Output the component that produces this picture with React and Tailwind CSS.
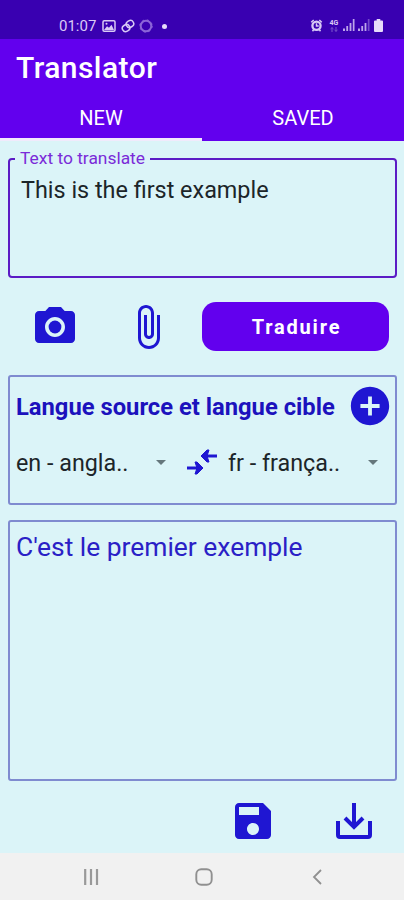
const blue = "#1f16d2";

const StatusBar = () => {
  return (
    <div className="h-[39px] shrink-0 bg-[#3900b1] flex justify-between pt-[16px] pl-[59px] pr-[21px] text-[#d9caf5]">
      <div className="flex items-center h-[20px]">
        <span className="w-[43px] text-[15px] leading-[20px] whitespace-nowrap">01:07</span>
        <svg width="14" height="12" viewBox="0 0 14 12" fill="none" stroke="currentColor">
          <rect x="1" y="0.8" width="12" height="10.4" rx="1.2" strokeWidth="1.5" />
          <path d="M2 10 5 6.2 7 7.8l2.5-3 2.5 5.2z" fill="currentColor" stroke="none" />
          <circle cx="4.5" cy="3.7" r="1" fill="currentColor" stroke="none" />
        </svg>
        <svg className="ml-[5px]" width="14" height="14" viewBox="0 0 14 14" fill="none" stroke="currentColor" strokeWidth="1.5">
          <rect x="5.2" y="1.6" width="7.6" height="6.6" rx="3.3" transform="rotate(-30 9 5)" />
          <rect x="1.2" y="5.8" width="7.6" height="6.6" rx="3.3" transform="rotate(-30 5 9)" />
        </svg>
        <svg className="ml-[4px]" width="14" height="14" viewBox="0 0 14 14" fill="none" stroke="#8c64d8">
          <circle cx="7" cy="7" r="5.3" strokeWidth="2" />
          <circle cx="7" cy="7" r="6.2" strokeWidth="1" strokeDasharray="2 2.9" />
        </svg>
        <span className="ml-[9px] size-[5px] rounded-full bg-[#e6dbfa]" />
      </div>
      <div className="flex items-center h-[18px]">
        <svg width="13" height="13" viewBox="0 0 12 13" fill="none" stroke="currentColor">
          <circle cx="6" cy="6.8" r="4.1" strokeWidth="2.3" />
          <path d="M6 4.2V7h2.2M.7 3.2 3.2 1M11.3 3.2 8.8 1M2 12.2l1.4-2M10 12.2l-1.4-2" strokeWidth="1.5" />
        </svg>
        <div className="ml-[6px] w-[10px] flex flex-col items-center">
          <span className="text-[7px] leading-[8px] font-bold">4G</span>
          <svg width="8" height="5" viewBox="0 0 8 5" fill="none" stroke="#7d56cc">
            <path d="M2 5V.8M.5 2 2 .6 3.5 2M6 0v4.2M4.5 3 6 4.4 7.5 3" />
          </svg>
        </div>
        <svg className="ml-[4px]" width="12" height="12" viewBox="0 0 12 12" fill="#bda5ea">
          <path d="M0 9.5h2V12H0zM3.3 7h1.8v5H3.3zM6.6 4h1.8v8H6.6zM9.8 0h1.7v12H9.8z" />
        </svg>
        <svg className="ml-[3px]" width="12" height="12" viewBox="0 0 12 12" fill="#bda5ea">
          <path d="M0 9.5h2V12H0zM3.3 7h1.8v5H3.3zM6.6 4h1.8v8H6.6z" />
          <path d="M9.8 0h1.7v12H9.8z" opacity=".45" />
        </svg>
        <svg className="ml-[4px]" width="9" height="13" viewBox="0 0 9 13" fill="#e6dcfa">
          <path d="M2.7 0h3.6v1.5H8q1 0 1 1V12q0 1-1 1H1q-1 0-1-1V2.5q0-1 1-1h1.7z" />
        </svg>
      </div>
    </div>
  );
};

const Header = () => {
  return (
    <header className="h-[102px] shrink-0 bg-[#6200ee] text-white flex flex-col">
      <h1 className="h-[57px] pl-[16px] text-[30px] leading-[57px] font-medium tracking-[0.45px]">Translator</h1>
      <nav className="flex">
        <button className="flex-1 h-[45px] border-b-[3px] border-[#f1eafc] pt-[1px] text-[20px]">NEW</button>
        <button className="flex-1 h-[45px] border-b-[3px] border-transparent pt-[1px] text-[20px]">SAVED</button>
      </nav>
    </header>
  );
};

const LanguageSelect = ({ label, className }) => {
  return (
    <button className={`flex items-center justify-between text-[23.3px] leading-[30px] text-[#1c2529] ${className}`}>
      <span className="pt-[2px] whitespace-nowrap">{label}</span>
      <svg width="10" height="5" viewBox="0 0 10 5" fill="#65777c">
        <path d="M0 0h10L5 5z" />
      </svg>
    </button>
  );
};

const NavigationBar = () => {
  return (
    <div className="h-[47px] shrink-0 bg-[#f1f1f1] flex items-center pl-[83px]">
      <svg width="16" height="16" viewBox="0 0 16 16" fill="none" stroke="#999" strokeWidth="2.2">
        <path d="M2.2 0v16M8 0v16M14 0v16" />
      </svg>
      <svg className="ml-[96px]" width="18" height="18" viewBox="0 0 18 18" fill="none" stroke="#909090" strokeWidth="1.9">
        <rect x="1.3" y="1.3" width="15.4" height="15.4" rx="5" />
      </svg>
      <svg className="ml-[99px]" width="10" height="16" viewBox="0 0 10 16" fill="none" stroke="#909090" strokeWidth="1.8">
        <path d="M9 1 2 8l7 7" />
      </svg>
    </div>
  );
};

const App = () => {
  return (
    <div className="w-[404px] h-[900px] overflow-hidden flex flex-col bg-[#dbf4f8] font-['Roboto',sans-serif]">
      <StatusBar />
      <Header />

      <main className="flex-1 flex flex-col pl-[8px] pr-[7px] pt-[9px]">
        <fieldset className="h-[128px] shrink-0 border-2 border-[#5b1bc5] rounded-[4px] px-[5px] min-w-0">
          <legend className="px-[5px] text-[17.4px] leading-[17px] text-[#7a2bd8] whitespace-nowrap">Text to translate</legend>
          <p className="pt-[9px] pl-[6px] text-[23.4px] leading-[28px] text-[#1c2529] whitespace-nowrap">This is the first example</p>
        </fieldset>

        <div className="mt-[24px] h-[49px] flex items-center">
          <button className="ml-[23px]">
            <svg width="48" height="48" viewBox="0 0 24 24" fill={blue}>
              <circle cx="12" cy="12" r="3.2" />
              <path d="M9 2 7.17 4H4c-1.1 0-2 .9-2 2v12c0 1.1.9 2 2 2h16c1.1 0 2-.9 2-2V6c0-1.1-.9-2-2-2h-3.17L15 2H9zm3 15c-2.76 0-5-2.24-5-5s2.24-5 5-5 5 2.24 5 5-2.24 5-5 5z" />
            </svg>
          </button>
          <button className="ml-[45px]">
            <svg width="48" height="48" viewBox="0 0 24 24" fill={blue}>
              <path d="M16.5 6v11.5c0 2.21-1.79 4-4 4s-4-1.79-4-4V5c0-1.38 1.12-2.5 2.5-2.5s2.5 1.12 2.5 2.5v10.5c0 .55-.45 1-1 1s-1-.45-1-1V6H10v9.5c0 1.38 1.12 2.5 2.5 2.5s2.5-1.12 2.5-2.5V5c0-2.21-1.79-4-4-4S7 2.79 7 5v12.5c0 3.04 2.46 5.5 5.5 5.5s5.5-2.46 5.5-5.5V6h-1.5z" />
            </svg>
          </button>
          <button className="ml-auto mr-[8px] w-[187px] h-[49px] pl-[2px] rounded-[14px] bg-[#6200ee] text-white text-[20px] font-bold tracking-[1.8px]">
            Traduire
          </button>
        </div>

        <section className="mt-[24px] h-[130px] shrink-0 border-2 border-[#7f8bd0] rounded-[3px] pl-[6px] pr-[2px] pt-[5px]">
          <div className="flex items-center justify-between h-[48px]">
            <h2 className="pt-[3px] text-[23.75px] font-bold text-[#1c12bd] whitespace-nowrap">Langue source et langue cible</h2>
            <svg className="shrink-0" width="46" height="46" viewBox="0 0 24 24" fill={blue}>
              <path d="M12 2C6.48 2 2 6.48 2 12s4.48 10 10 10 10-4.48 10-10S17.52 2 12 2zm5 11h-4v4h-2v-4H7v-2h4V7h2v4h4v2z" />
            </svg>
          </div>
          <div className="mt-[16px] flex items-center h-[32px]">
            <LanguageSelect label="en - angla.." className="w-[150px]" />
            <svg className="ml-[20px] shrink-0" width="32" height="28" viewBox="0 0 32 28" fill={blue} stroke={blue}>
              <path d="M1 20h12M31 8H19" strokeWidth="3" />
              <path d="M9 14h2l6 6-6 6H9l2-6zM23 2h-2l-6 6 6 6h2l-2-6z" strokeWidth="1" strokeLinejoin="round" />
            </svg>
            <LanguageSelect label="fr - frança.." className="ml-[10px] w-[150px]" />
          </div>
        </section>

        <section className="mt-[15px] h-[261px] shrink-0 border-2 border-[#7f8bd0] rounded-[3px] px-[6px] pt-[9px]">
          <p className="text-[26.4px] leading-[32px] text-[#2a20c6] whitespace-nowrap">C'est le premier exemple</p>
        </section>

        <div className="flex items-center justify-end pt-[16px] pr-[19px] gap-[53px]">
          <svg width="48" height="48" viewBox="0 0 24 24" fill={blue}>
            <path d="M17 3H5c-1.11 0-2 .9-2 2v14c0 1.1.89 2 2 2h14c1.1 0 2-.9 2-2V7l-4-4zm-5 16c-1.66 0-3-1.34-3-3s1.34-3 3-3 3 1.34 3 3-1.34 3-3 3zm3-10H5V5h10v4z" />
          </svg>
          <svg width="48" height="48" viewBox="0 0 24 24" fill="none" stroke={blue} strokeWidth="2">
            <path d="M4 12v7q0 1 1 1h14q1 0 1-1v-7M12 3v12M7.5 10.5 12 15l4.5-4.5" />
          </svg>
        </div>
      </main>

      <NavigationBar />
    </div>
  );
};

export default App;
